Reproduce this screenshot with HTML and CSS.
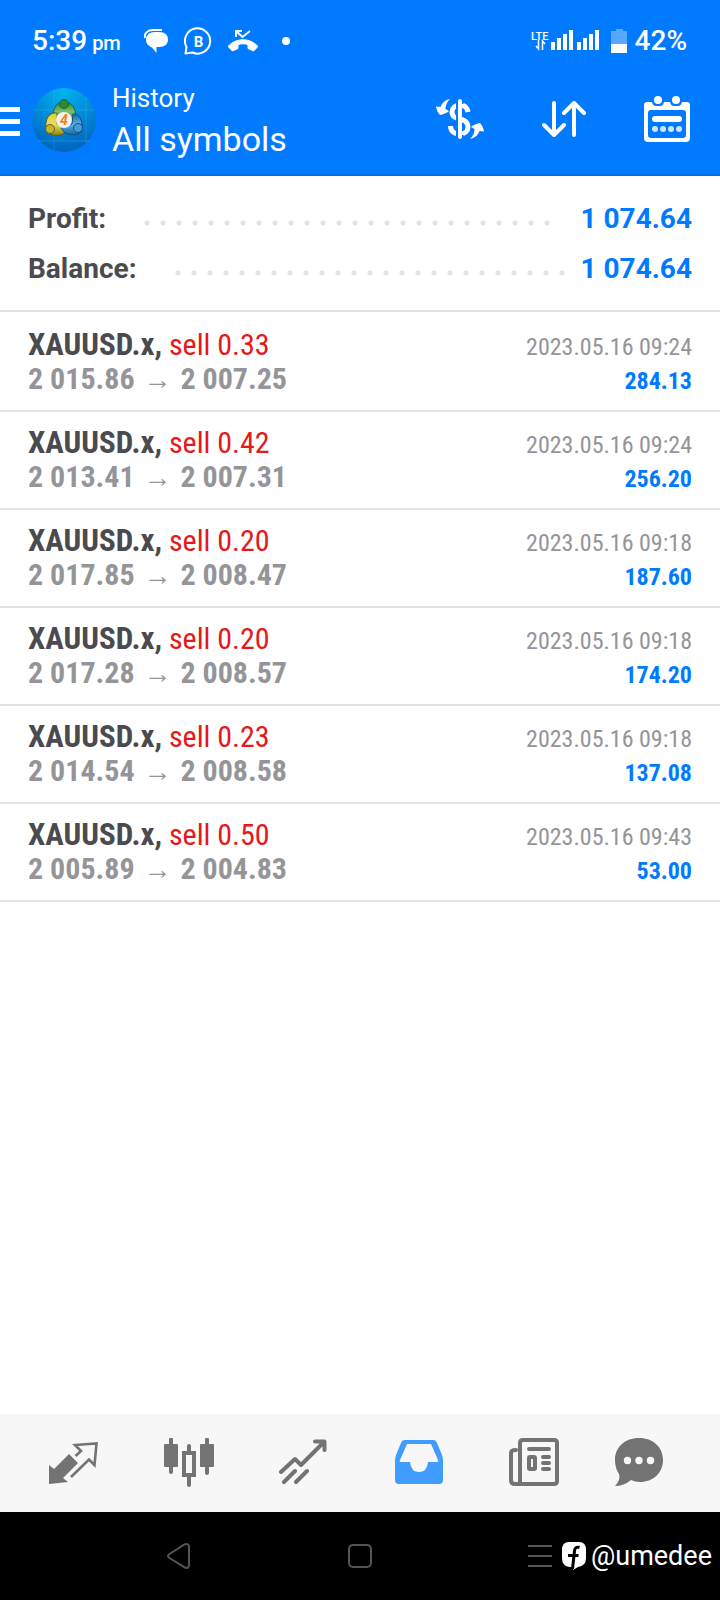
FILE: index.html
```html
<!DOCTYPE html>
<html lang="en">
<head>
<meta charset="utf-8">
<meta name="viewport" content="width=device-width, initial-scale=1">
<title>History</title>
<link rel="stylesheet" href="styles.css">
</head>
<body>
<div class="screen">
  <header class="header">
    <div class="status">
      <div class="clock">5:39<span class="clock-period">pm</span></div>
      <div class="notices">
        <svg width="24" height="24" viewBox="0 0 24 24" aria-hidden="true"><path d="M1 9C0 4 4 1 9 1H18" fill="none" stroke="#fff" stroke-width="2"/><path d="M11 3H15C21 3 24 6 24 10.500C24 15 21 18 15 18H12.500V24L8 18.500C4.500 17 2 14.500 2 10.500C2 6 5.500 3 11 3Z" fill="#fff"/></svg>
        <svg width="28" height="28" viewBox="0 0 28 28" aria-hidden="true"><path d="M1.500 26.500L2.500 20A12.600 12.600 0 1 1 8.500 25.500Z" fill="none" stroke="#fff" stroke-width="2" stroke-linejoin="round"/><text x="14.500" y="19.500" text-anchor="middle" class="badge-letter">B</text></svg>
        <svg width="30" height="22" viewBox="0 0 30 22" aria-hidden="true"><path d="M8 7V1H14M8.500 1.500L14.500 7L22 1" fill="none" stroke="#fff" stroke-width="2"/><path d="M0 16.500C8 7.500 22 7.500 30 16.500L25.500 21L20 18.500V14.500C17 13.500 13 13.500 10 14.500V18.500L4.500 21Z" fill="#fff" stroke="#fff" stroke-linejoin="round"/></svg>
        <span class="notice-dot"></span>
      </div>
      <div class="system">
        <svg width="68" height="21" viewBox="0 0 68 21" aria-hidden="true" fill="#fff"><text x="0" y="10" class="network">LTE</text><path d="M7.500 10V19L5 16M11.500 20V11L14 14" fill="none" stroke="#fff" stroke-width="1.500"/><path d="M20 12h4v8h-4zM26 8h4v12h-4zM32 4h4v16h-4zM38 0h4v20h-4zM46 12h4v8h-4zM52 8h4v12h-4zM58 4h4v16h-4zM64 0h4v20h-4z"/></svg>
        <svg width="16" height="24" viewBox="0 0 16 24" aria-hidden="true" fill="#fff"><path d="M5 0h7v2h4v13H0V2h5z" opacity=".35"/><path d="M0 15h16v9H0z"/></svg>
        <span>42%</span>
      </div>
    </div>
    <div class="toolbar">
      <button class="menu" aria-label="Menu"><i></i><i></i><i></i></button>
      <svg class="logo" width="64" height="64" viewBox="0 0 64 64" aria-hidden="true">
        <defs>
          <radialGradient id="sky" cx=".5" cy=".05" r=".95"><stop offset="0" stop-color="#00b4ee"/><stop offset=".5" stop-color="#008bd8"/><stop offset="1" stop-color="#0064bd"/></radialGradient>
          <linearGradient id="green" x2="0" y2="1"><stop stop-color="#2c8434"/><stop offset=".5" stop-color="#7cc06a"/><stop offset="1" stop-color="#2b8332"/></linearGradient>
          <linearGradient id="gold" x2="0" y2="1"><stop stop-color="#d9d02c"/><stop offset=".5" stop-color="#e9df62"/><stop offset="1" stop-color="#8d8412"/></linearGradient>
          <linearGradient id="blue" x2="0" y2="1"><stop stop-color="#1c69a8"/><stop offset=".5" stop-color="#57b4e6"/><stop offset="1" stop-color="#1664a3"/></linearGradient>
        </defs>
        <circle cx="32" cy="32" r="32" fill="url(#sky)"/>
        <path d="M22 2V62M54 9V55M2 22H62M5 53H59" stroke="#58bdf0" stroke-opacity=".3"/>
        <path d="M22 30C20 20 25 14 32 14C39 14 45 20 43 30L38 33L27 31Z" fill="url(#green)" stroke="#1f6428"/>
        <path d="M25 25C17 24 13 31 14 40C15 47 24 49 31 46L34 42L25 36Z" fill="url(#gold)" stroke="#655f13"/>
        <path d="M41 26C48 26 50 32 50 40C51 46 42 49 33 45L29 40L40 36Z" fill="url(#blue)" stroke="#164e80"/>
        <circle cx="32" cy="16" r="4.500" fill="#2b8b34" stroke="#1f6428"/>
        <circle cx="18" cy="41" r="4.500" fill="#c2b52c" stroke="#655f13"/>
        <circle cx="46" cy="40" r="4.500" fill="#449ed6" stroke="#164e80"/>
        <circle cx="32" cy="32" r="8" fill="#f6f2ee"/>
        <text x="32" y="37" text-anchor="middle" class="logo-number">4</text>
      </svg>
      <h1 class="titles"><span class="title-small">History</span><span class="title-large">All symbols</span></h1>
      <div class="actions">
        <button aria-label="Deals"><svg width="48" height="40" viewBox="0 0 48 40"><path d="M32 13C31 8 28 6 24 6C19 6 16 9 16 13C16 18 20 19 24 20C29 21 32 24 32 28C32 32 29 35 24 35C18 35 14.500 32 14.500 27" fill="none" stroke="#fff" stroke-width="5"/><path d="M21 2V39M26.500 2V5M26.500 36V39" stroke="#007aff" stroke-width="2"/><path d="M24 2V38" stroke="#fff" stroke-width="4" stroke-linecap="round"/><path id="swap" d="M14 0C9 1 6 4 4.500 8L0 7.500C.500 11 2 14 4 16C7 15.500 11 14 13 12L9.500 10C9.500 6 11 3 14 0Z" fill="#fff"/><use href="#swap" transform="rotate(180 24 20)"/></svg></button>
        <button aria-label="Sort"><svg width="44" height="36" viewBox="0 0 44 36" fill="none" stroke="#fff" stroke-width="4" stroke-linecap="round" stroke-linejoin="round"><path d="M12 2V33M2 24L12 34L22 24M32 34V3M22 12L32 2L42 12"/></svg></button>
        <button aria-label="Period"><svg width="46" height="46" viewBox="0 0 46 46" fill="#fff"><path fill-rule="evenodd" d="M3 6H8C8.500 8.500 10 10 12 10H16C18 10 19.500 8.500 20 6H26C26.500 8.500 28 10 30 10H34C36 10 37.500 8.500 38 6H43Q46 6 46 9V42Q46 46 42 46H4Q0 46 0 42V9Q0 6 3 6ZM7 14Q4 14 4 17V39Q4 42 7 42H39Q42 42 42 39V17Q42 14 39 14Z"/><circle cx="14" cy="4" r="4"/><circle cx="32" cy="4" r="4"/><rect x="8" y="20" width="30" height="6" rx="3"/><g opacity=".8"><circle cx="11" cy="33" r="3"/><circle cx="19" cy="33" r="3"/><circle cx="27" cy="33" r="3"/><circle cx="35" cy="33" r="3"/></g></svg></button>
      </div>
    </div>
  </header>

  <main class="content">
    <dl class="summary">
      <div class="total"><dt>Profit:</dt><dd><span class="leader"><i></i></span>1 074.64</dd></div>
      <div class="total"><dt>Balance:</dt><dd><span class="leader"><i></i></span>1 074.64</dd></div>
    </dl>
    <ul class="deals">
      <li class="deal"><div class="line"><div><b class="symbol">XAUUSD.x,</b> <span class="side">sell 0.33</span></div><time class="date">2023.05.16 09:24</time></div><div class="line"><div class="prices">2 015.86 <span class="arrow">→</span> 2 007.25</div><div class="gain">284.13</div></div></li>
      <li class="deal"><div class="line"><div><b class="symbol">XAUUSD.x,</b> <span class="side">sell 0.42</span></div><time class="date">2023.05.16 09:24</time></div><div class="line"><div class="prices">2 013.41 <span class="arrow">→</span> 2 007.31</div><div class="gain">256.20</div></div></li>
      <li class="deal"><div class="line"><div><b class="symbol">XAUUSD.x,</b> <span class="side">sell 0.20</span></div><time class="date">2023.05.16 09:18</time></div><div class="line"><div class="prices">2 017.85 <span class="arrow">→</span> 2 008.47</div><div class="gain">187.60</div></div></li>
      <li class="deal"><div class="line"><div><b class="symbol">XAUUSD.x,</b> <span class="side">sell 0.20</span></div><time class="date">2023.05.16 09:18</time></div><div class="line"><div class="prices">2 017.28 <span class="arrow">→</span> 2 008.57</div><div class="gain">174.20</div></div></li>
      <li class="deal"><div class="line"><div><b class="symbol">XAUUSD.x,</b> <span class="side">sell 0.23</span></div><time class="date">2023.05.16 09:18</time></div><div class="line"><div class="prices">2 014.54 <span class="arrow">→</span> 2 008.58</div><div class="gain">137.08</div></div></li>
      <li class="deal"><div class="line"><div><b class="symbol">XAUUSD.x,</b> <span class="side">sell 0.50</span></div><time class="date">2023.05.16 09:43</time></div><div class="line"><div class="prices">2 005.89 <span class="arrow">→</span> 2 004.83</div><div class="gain">53.00</div></div></li>
    </ul>
  </main>

  <nav class="tabs" aria-label="Sections">
    <button aria-label="Quotes"><svg width="50" height="50" viewBox="0 -4 50 50"><path d="M0 23L5 27L20 12L29 21L14 36L19 40L0 42Z" fill="#737373"/><path d="M26.500 14L32 9L26 3L47.500 1.500L45.500 23L40 17.500L22 35" fill="none" stroke="#737373" stroke-width="2.600"/></svg></button>
    <button aria-label="Charts"><svg width="50" height="50" viewBox="0 0 50 50" fill="#737373"><path d="M7 1.500V34M43 1.500V35M25 8V14M25 38V47" stroke="#737373" stroke-width="4" stroke-linecap="round"/><rect x="0" y="6" width="14" height="23" rx="1"/><rect x="36" y="6" width="14" height="23" rx="1"/><rect x="20" y="15" width="10" height="22" fill="none" stroke="#737373" stroke-width="4"/></svg></button>
    <button aria-label="Trade"><svg width="50" height="50" viewBox="1 0 50 50" fill="none" stroke="#737373" stroke-width="4" stroke-linecap="round" stroke-linejoin="round"><path d="M3 34L17 21L23 27L46 4M37 3.500H46.500V12M6 44L17 33M18 44L29 33"/></svg></button>
    <button aria-label="History" aria-current="page"><svg width="50" height="50" viewBox="0 0 50 50"><path fill="#409cff" fill-rule="evenodd" d="M11 2H39Q42 2 43 5L48 17Q49 20 49 23V42Q49 46 45 46H5Q1 46 1 42V23Q1 20 2 17L7 5Q8 2 11 2ZM13 6L6 22Q5 24 7 24H16Q17 34 25 34Q33 34 34 24H43Q45 24 44 22L37 6Z"/></svg></button>
    <button aria-label="News"><svg width="50" height="50" viewBox="0 0 50 50" fill="none" stroke="#737373" stroke-width="4"><path d="M11 44V5Q11 2 14 2H45Q48 2 48 5V43Q48 46 45 46H6Q2 46 2 42V15Q2 12 7 12" stroke-linecap="round"/><path d="M20 11H40M34 19H40M34 25H40M34 31H40" stroke-linecap="round"/><rect x="20" y="19" width="6" height="12" rx="1"/></svg></button>
    <button aria-label="Messages"><svg width="50" height="50" viewBox="0 0 50 50"><path fill="#737373" d="M25 0C39 0 49 9 49 22C49 35 39 44 26 44Q21 44 17 42Q10 48 1 48Q7 42 5 36Q1 30 1 22C1 9 11 0 25 0Z"/><g fill="#f7f7f7"><circle cx="13.500" cy="22.500" r="3.700"/><circle cx="25" cy="22.500" r="3.700"/><circle cx="36.500" cy="22.500" r="3.700"/></g></svg></button>
  </nav>

  <footer class="system-nav">
    <button aria-label="Back"><svg width="28" height="28" viewBox="0 0 28 28"><path d="M3.500 12L18.500 2.500Q23 1 23 5V23Q23 27 19 25.500L3.500 16Q.500 14 3.500 12Z"/></svg></button>
    <button aria-label="Home"><svg width="28" height="28" viewBox="0 0 28 28"><rect x="3" y="3" width="22" height="22" rx="4"/></svg></button>
    <button aria-label="Recent apps"><svg width="28" height="28" viewBox="0 0 28 28"><path d="M2 4H26M2 14H26M2 24H26"/></svg></button>
    <div class="credit">
      <svg width="26" height="30" viewBox="0 0 26 30" aria-hidden="true"><path d="M8 1H18Q25 1 25 9V17Q25 25 17 26L12 29V26H8Q1 25 1 17V9Q1 1 8 1Z" fill="#fff"/><path d="M18.500 6.500Q14 5 13.500 10L11.500 28M7 14.500H17.500" fill="none" stroke="#000" stroke-width="3"/></svg>
      <span>@umedee</span>
    </div>
  </footer>
</div>
</body>
</html>
```
FILE: styles.css
```css
* {
  box-sizing: border-box;
}

body {
  margin: 0;
  background: #fff;
  font-family: Roboto, "Liberation Sans", sans-serif;
  color: #4a4a4f;
}

button {
  display: flex;
  align-items: center;
  justify-content: center;
  padding: 0;
  border: 0;
  background: none;
}

svg {
  display: block;
  flex: none;
}

.screen {
  display: flex;
  flex-direction: column;
  min-height: 100vh;
}

.header {
  background: #007aff;
  border-bottom: 2px solid #006fe6;
  color: #fff;
}

.status {
  display: flex;
  align-items: center;
  height: 76px;
  padding: 5px 33px 0 32px;
  font-size: 28px;
  font-weight: 500;
}

.clock-period {
  margin-left: 5px;
  font-size: 20px;
}

.notices {
  display: flex;
  align-items: center;
  gap: 16px;
  margin-left: 23px;
}

.notice-dot {
  width: 8px;
  height: 8px;
  margin-left: 8px;
  border-radius: 50%;
  background: #fff;
}

.system {
  display: flex;
  align-items: center;
  gap: 8px;
  margin-left: auto;
}

.system svg + svg {
  margin-left: 4px;
}

.badge-letter {
  fill: #fff;
  font-size: 15px;
  font-weight: 700;
}

.network {
  font-size: 11px;
  font-weight: 500;
}

.logo-number {
  fill: #f58220;
  font-size: 14px;
  font-weight: 700;
  font-style: italic;
}

.toolbar {
  display: flex;
  align-items: center;
  height: 98px;
  padding: 0 30px 10px 0;
}

.menu {
  flex-direction: column;
  gap: 7px;
  width: 20px;
  padding-top: 2px;
}

.menu i {
  width: 100%;
  height: 5px;
  background: #fff;
}

.logo {
  margin-left: 12px;
}

.titles {
  display: flex;
  flex-direction: column;
  margin: 0 0 0 16px;
  font-weight: 400;
}

.title-small {
  font-size: 26px;
  line-height: 38px;
}

.title-large {
  font-size: 34px;
  line-height: 44px;
}

.actions {
  display: flex;
  align-items: center;
  gap: 58px;
  margin-left: auto;
  padding-bottom: 2px;
}

.content {
  flex: 1;
}

.summary {
  margin: 0;
  padding: 18px 28px 16px;
  border-bottom: 2px solid #e4e4e6;
  font-size: 28px;
  font-weight: 700;
  line-height: 50px;
}

.total {
  display: flex;
}

.total dd {
  display: flex;
  flex: 1;
  margin: 0;
  color: #007aff;
}

.leader {
  display: flex;
  flex: 1;
  margin: 0 15px 0 28px;
}

.leader i {
  width: round(down, 100%, 16px);
  background: radial-gradient(circle at 13px 29px, #e4e4e6 2px, transparent 3px) 0 0 / 16px 50px repeat-x;
}

.deals {
  margin: 0;
  padding: 2px 0 0;
  list-style: none;
  font-family: "Roboto Condensed", Roboto, "Liberation Sans", sans-serif;
  font-size: 30px;
}

.deal {
  padding: 14px 28px;
  border-bottom: 2px solid #e4e4e6;
}

.line {
  display: flex;
  align-items: baseline;
  justify-content: space-between;
  height: 34px;
  line-height: 34px;
}

.symbol,
.prices,
.gain {
  font-weight: 700;
}

.symbol {
  font-size: 31px;
}

.side {
  color: #e5181b;
}

.prices,
.date {
  color: #959599;
}

.date,
.gain {
  font-size: 24px;
}

.gain {
  color: #007aff;
}

.arrow {
  margin: 0 2px;
  font-family: "Liberation Sans", sans-serif;
  font-size: 28px;
  font-weight: 400;
  line-height: 1;
}

.tabs {
  display: grid;
  grid-template-columns: repeat(5, 115fr) 96fr;
  height: 98px;
  padding: 0 33px 0 16px;
  background: #f7f7f7;
}

.system-nav {
  position: relative;
  display: grid;
  grid-template-columns: repeat(3, 1fr);
  height: 88px;
  padding: 0 90px;
  background: #000;
}

.system-nav button svg {
  fill: none;
  stroke: #555;
  stroke-width: 2;
}

.credit {
  position: absolute;
  top: 0;
  right: 8px;
  bottom: 0;
  display: flex;
  align-items: center;
  gap: 4px;
  color: #fff;
  font-size: 27px;
}
```
